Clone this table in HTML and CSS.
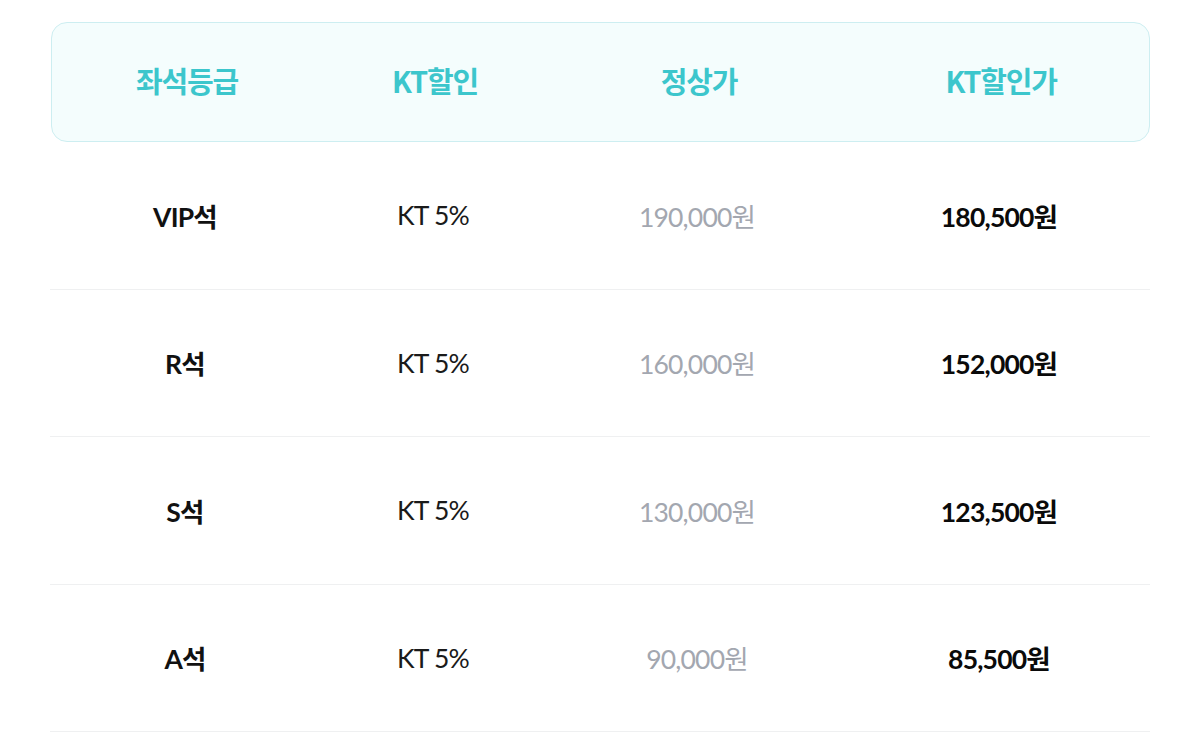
FILE: index.html
```html
<!DOCTYPE html>
<html lang="ko">
<head>
<meta charset="utf-8">
<link rel="stylesheet" href="styles.css">
</head>
<body>
<div class="table">
  <div class="head">
    <div class="cell">좌석등급</div>
    <div class="cell">KT할인</div>
    <div class="cell">정상가</div>
    <div class="cell">KT할인가</div>
  </div>
  <div class="row">
    <div class="cell grade">VIP석</div>
    <div class="cell disc">KT 5%</div>
    <div class="cell price">190,000원</div>
    <div class="cell final">180,500원</div>
  </div>
  <div class="row">
    <div class="cell grade">R석</div>
    <div class="cell disc">KT 5%</div>
    <div class="cell price">160,000원</div>
    <div class="cell final">152,000원</div>
  </div>
  <div class="row">
    <div class="cell grade">S석</div>
    <div class="cell disc">KT 5%</div>
    <div class="cell price">130,000원</div>
    <div class="cell final">123,500원</div>
  </div>
  <div class="row">
    <div class="cell grade">A석</div>
    <div class="cell disc">KT 5%</div>
    <div class="cell price">90,000원</div>
    <div class="cell final">85,500원</div>
  </div>
</div>
</body>
</html>
```

FILE: styles.css
```css
html, body {
  margin: 0;
  padding: 0;
  background: #ffffff;
}
body {
  font-family: "Lato", "Noto Sans CJK KR", sans-serif;
}
.table {
  width: 1100px;
  margin: 22px 0 0 50px;
}
.head, .row {
  display: grid;
  grid-template-columns: 270px 226px 302px 302px;
  align-items: center;
}
.head {
  height: 118px;
  margin-left: 1px;
  width: 1097px;
  background: #f4fdfd;
  border: 1.5px solid #cdeef1;
  border-radius: 16px;
  color: #3cc6cc;
  font-family: "Noto Sans CJK KR", sans-serif;
  font-weight: 700;
  font-size: 29px;
  letter-spacing: -1.2px;
}
.head .cell {
  padding-bottom: 4px;
}
.row {
  height: 146.5px;
  border-bottom: 1px solid #eff0f1;
  font-size: 26.5px;
  letter-spacing: -0.8px;
}
.cell {
  text-align: center;
}
.grade {
  font-weight: 700;
  color: #111111;
}
.disc {
  color: #1a1a1a;
}
.price {
  color: #a3a7b0;
}
.final {
  font-weight: 700;
  color: #0a0a0a;
}
```
